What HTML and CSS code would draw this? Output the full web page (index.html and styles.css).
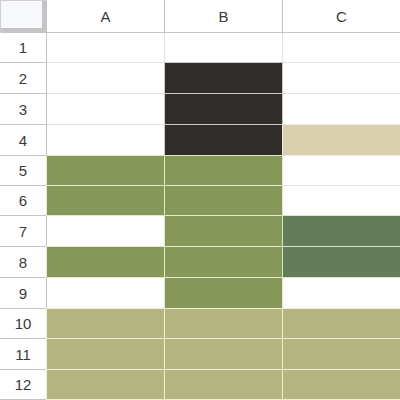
FILE: index.html
```html
<!DOCTYPE html>
<html>
<head>
<meta charset="utf-8">
<link rel="stylesheet" href="styles.css">
</head>
<body>
<div class="sheet">
  <div class="corner"></div>
  <div class="colh">A</div>
  <div class="colh">B</div>
  <div class="colh">C</div>

  <div class="rowh">1</div><div class="cell"></div><div class="cell"></div><div class="cell"></div>
  <div class="rowh">2</div><div class="cell"></div><div class="cell dark"></div><div class="cell"></div>
  <div class="rowh">3</div><div class="cell"></div><div class="cell dark"></div><div class="cell"></div>
  <div class="rowh">4</div><div class="cell"></div><div class="cell dark"></div><div class="cell tan"></div>
  <div class="rowh">5</div><div class="cell green"></div><div class="cell green"></div><div class="cell"></div>
  <div class="rowh">6</div><div class="cell green"></div><div class="cell green"></div><div class="cell"></div>
  <div class="rowh">7</div><div class="cell"></div><div class="cell green"></div><div class="cell dgreen"></div>
  <div class="rowh">8</div><div class="cell green"></div><div class="cell green"></div><div class="cell dgreen"></div>
  <div class="rowh">9</div><div class="cell"></div><div class="cell green"></div><div class="cell"></div>
  <div class="rowh">10</div><div class="cell olive"></div><div class="cell olive"></div><div class="cell olive"></div>
  <div class="rowh">11</div><div class="cell olive"></div><div class="cell olive"></div><div class="cell olive"></div>
  <div class="rowh">12</div><div class="cell olive"></div><div class="cell olive"></div><div class="cell olive"></div>
</div>
</body>
</html>
```
FILE: styles.css
```css
html, body {
  margin: 0;
  padding: 0;
  background: #ffffff;
}
.sheet {
  display: grid;
  grid-template-columns: 46px 117px 117px 117px;
  grid-template-rows: 32px 29px 30px 30px 30px 29px 29px 30px 30px 30px 29px 30px 29px;
  gap: 1px;
  width: 400px;
  height: 400px;
  background: #e2e2e2;
  font-family: "Liberation Sans", Arial, sans-serif;
  font-size: 15px;
  color: #3a3a3a;
  overflow: hidden;
}
.corner {
  background: #f6f8fc;
  border-top: 1px solid #cfcfcf;
  border-left: 1px solid #cfcfcf;
  border-right: 4px solid #c4c4c4;
  border-bottom: 4px solid #c4c4c4;
  box-shadow: 1px 1px 0 #c4c4c4;
}
.colh, .rowh {
  background: #ffffff;
  display: flex;
  align-items: center;
  justify-content: center;
  box-shadow: 1px 0 0 #c4c4c4, 0 1px 0 #c4c4c4, 1px 1px 0 #c4c4c4;
}
.cell {
  background: #ffffff;
}
.dark { background: #2f2c2a; box-shadow: 0 0 0 1px #c9c9c6; }
.tan { background: #d9ceae; box-shadow: 0 0 0 1px #f1ecdc; }
.green { background: #87975a; box-shadow: 0 0 0 1px #e2ebc9; }
.dgreen { background: #647d58; box-shadow: 0 0 0 1px #d9e6cf; }
.olive { background: #b4b57f; box-shadow: 0 0 0 1px #eef0d6; }
```
